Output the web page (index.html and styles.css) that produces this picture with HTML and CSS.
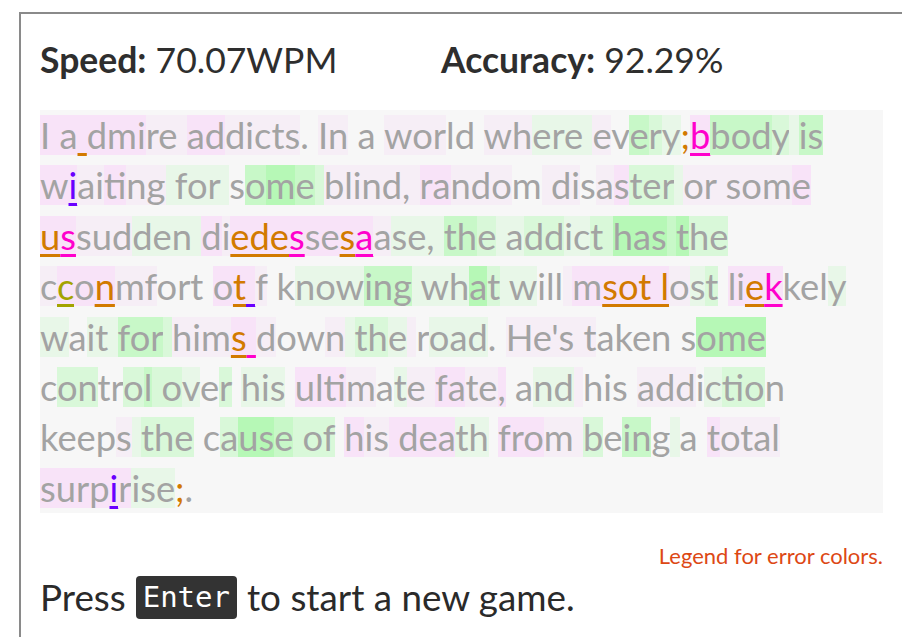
FILE: index.html
```html
<!DOCTYPE html>
<html lang="en">
<head>
<meta charset="utf-8">
<title>Typing game results</title>
<link rel="stylesheet" href="styles.css">
</head>
<body>
<main class="app">
  <div class="stats">
    <div class="stat"><b>Speed:</b> 70.07WPM</div>
    <div class="stat"><b>Accuracy:</b> 92.29%</div>
  </div>
  <p class="passage"><span class="p2">I a</span><span class="p2 eo"> </span><span class="p2">dmi</span><span class="p1">re </span><span class="p2">ad</span><span class="p1">dicts</span>. <span class="p1">In</span> a <span class="p1">wor</span>ld <span class="p1">wh</span><span class="g1">ere </span><span class="p1">e</span>v<span class="g3">e</span><span class="g2">r</span><span class="g1">y</span><span class="ec">;</span><span class="p2 em">b</span><span class="g3">bod</span><span class="g2">y</span><span class="g1"> </span><span class="g3">is</span>
<span class="p2">w</span><span class="p2 ep">i</span><span class="p1">ai</span><span class="p2">t</span><span class="p1">ing</span><span class="g1"> for </span>s<span class="g3">o</span><span class="g4">m</span><span class="g3">e</span><span class="g2"> </span><span class="p1">blind, </span><span class="p2">ra</span><span class="p1">ndo</span>m<span class="p1"> di</span>s<span class="p1">a</span><span class="p2">s</span><span class="g2">ter</span><span class="g1"> </span><span class="p1">or som</span><span class="p2">e</span>
<span class="p2 eo">u</span><span class="p2 em">s</span><span class="p1">sud</span><span class="g1">den </span><span class="p2">d</span><span class="p1">i</span><span class="p2 eo">ede</span><span class="p2 em">s</span><span class="p2">se</span><span class="p2 eo">s</span><span class="p2 em">a</span><span class="p1">a</span><span class="g1">se, </span><span class="g3">th</span><span class="g2">e</span><span class="g1"> a</span><span class="g2">dd</span><span class="g1">ic</span><span class="g2">t </span><span class="g4">has</span><span class="g3"> </span><span class="g4">t</span><span class="g2">he</span>
<span class="p1">c</span><span class="p2 ey">c</span><span class="p2">o</span><span class="p2 eo">n</span><span class="p1">mf</span>ort <span class="p2">o</span><span class="p2 eo">t</span><span class="p2 ep"> </span><span class="p1">f</span> k<span class="g1">now</span><span class="g3">ing</span><span class="g1"> wh</span><span class="g4">a</span><span class="g2">t</span><span class="g1"> w</span>ill<span class="p1"> </span><span class="p2">m</span><span class="p2 eo">sot l</span><span class="p1">o</span><span class="g1">s</span><span class="g2">t</span> <span class="p2">li</span><span class="p2 eo">e</span><span class="p2 em">k</span>kel<span class="g1">y</span>
<span class="g1">w</span>a<span class="g1">it </span><span class="g3">for</span><span class="g2"> </span><span class="p1">him</span><span class="p2 eo">s</span><span class="p2 em"> </span><span class="p1">d</span>ow<span class="p1">n</span><span class="g1"> </span><span class="g2">th</span><span class="g1">e</span><span class="p1"> </span>r<span class="g1">oad</span>. <span class="p1">He's t</span>aken s<span class="g4">ome</span>
c<span class="g2">on</span>tr<span class="g2">o</span><span class="g3">l</span><span class="g2"> o</span><span class="g1">v</span>e<span class="g2">r</span> <span class="g1">his</span> <span class="p2">ul</span><span class="p2">t</span><span class="p1">im</span>a<span class="g1">t</span><span class="p1">e </span><span class="p2">fa</span><span class="p1">te</span><span class="p2">,</span> a<span class="g1">nd</span><span class="p1"> </span>his <span class="p1">add</span>i<span class="g1">c</span><span class="g2">tio</span>n
keep<span class="p1">s</span><span class="g1"> </span><span class="g2">the</span> c<span class="g2">a</span><span class="g4">us</span><span class="g3">e</span><span class="g2"> of</span> <span class="p2">h</span><span class="p1">is</span><span class="p2"> dea</span><span class="g1">th</span> <span class="p2">fro</span><span class="p1">m </span><span class="g2">b</span>e<span class="g3">in</span>g<span class="g1"> </span>a <span class="p2">t</span><span class="p1">otal</span>
<span class="p2">surp</span><span class="p2 ep">i</span><span class="p2">r</span><span class="g1">ise</span><span class="ec">;</span>.</p>
  <p class="legend">Legend for error colors.</p>
  <p class="press"><span>Press</span><kbd class="key">Enter</kbd><span>to start a new game.</span></p>
</main>
</body>
</html>
```

FILE: styles.css
```css
html, body {
  margin: 0;
  background: #ffffff;
}

body {
  font-family: Lato, "Open Sans", sans-serif;
  color: #2e2e2e;
  overflow: hidden;
}

.app {
  margin: 12px 0 0 19px;
  border: 2px solid #8a8a8a;
  padding: 0 19px;
  width: 843px;
  min-height: 700px;
}

.stats {
  display: flex;
  font-size: 35.5px;
  line-height: 40px;
  padding: 26px 0 30px;
}

.stat:first-child {
  width: 401px;
}

.stat b {
  font-weight: 700;
}

.passage {
  margin: 0;
  background: #f7f7f7;
  color: #a3a3a3;
  font-size: 36.3px;
  line-height: 50.4px;
}

.passage span {
  --tint: transparent;
  background: linear-gradient(var(--tint), var(--tint)) 0 50% / 100% 40px no-repeat;
}

.p1 { --tint: #f6eef6; }
.passage .p1 { --tint: #f6eef6; }
.passage .p2 { --tint: #f8e3f8; }
.passage .g1 { --tint: #e8f7e8; }
.passage .g2 { --tint: #d9f8d9; }
.passage .g3 { --tint: #c8f8c8; }
.passage .g4 { --tint: #b6f8b6; }

.eo, .em, .ep, .ey {
  text-decoration: underline;
  text-decoration-thickness: 3px;
  text-underline-offset: 4px;
  text-decoration-skip-ink: none;
}

.eo { color: #d27a00; }
.em { color: #ff00cc; }
.ep { color: #6a00ff; }
.ey { color: #a3a300; }
.ec { color: #d27a00; }

.legend {
  margin: 31px 0 0;
  text-align: right;
  font-size: 22px;
  line-height: 24px;
  color: #dd4814;
}

.press {
  margin: 7px 0 0;
  display: flex;
  align-items: center;
  gap: 10px;
  font-size: 36.8px;
  line-height: 44px;
  color: #2a2a2a;
}

.key {
  display: inline-block;
  background: #333333;
  color: #ffffff;
  font-family: "DejaVu Sans Mono", monospace;
  font-size: 29px;
  line-height: 43px;
  padding: 0 7px;
  border-radius: 4px;
}
```
